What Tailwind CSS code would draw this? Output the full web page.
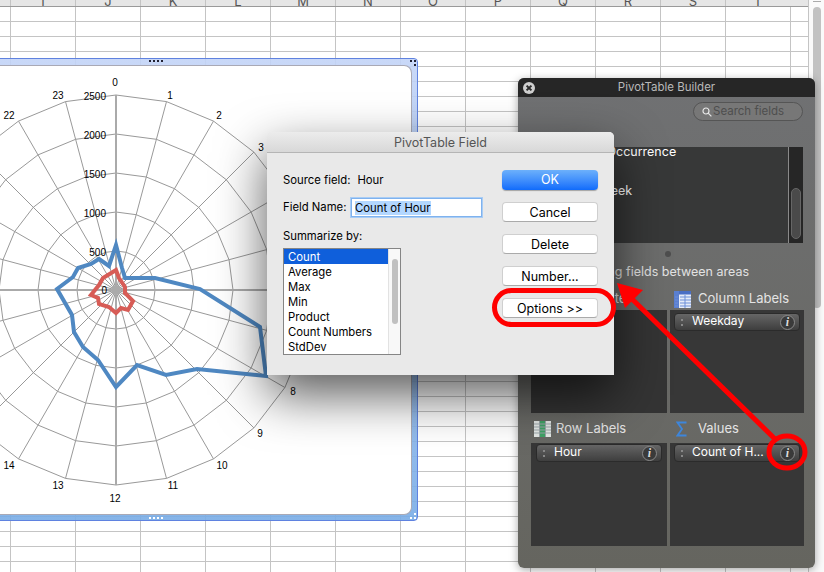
<!DOCTYPE html>
<html lang="en">
<head>
<meta charset="utf-8">
<title>PivotTable Field</title>
<script src="https://cdn.jsdelivr.net/npm/@tailwindcss/browser@4"></script>
</head>
<body class="bg-white">
<div class="relative w-[824px] h-[572px] overflow-hidden font-['Inter','Liberation_Sans',sans-serif] text-[11.3px] text-black">

	<!-- sheet: column header + cell grid + scrollbar -->
	<div class="absolute inset-0 flex">
		<div class="w-[808px] h-full flex flex-col">
			<div class="h-[7px] shrink-0 overflow-hidden bg-[#e6e6e6] border-b border-[#9a9a9a] flex pl-[10px] text-[13px] leading-[3px] text-[#555]">
				<div class="w-[65px] border-l border-[#c4c4c4] text-center">I</div>
				<div class="w-[65px] border-l border-[#c4c4c4] text-center">J</div>
				<div class="w-[65px] border-l border-[#c4c4c4] text-center">K</div>
				<div class="w-[65px] border-l border-[#c4c4c4] text-center">L</div>
				<div class="w-[65px] border-l border-[#c4c4c4] text-center">M</div>
				<div class="w-[65px] border-l border-[#c4c4c4] text-center">N</div>
				<div class="w-[65px] border-l border-[#c4c4c4] text-center">O</div>
				<div class="w-[65px] border-l border-[#c4c4c4] text-center">P</div>
				<div class="w-[65px] border-l border-[#c4c4c4] text-center">Q</div>
				<div class="w-[65px] border-l border-[#c4c4c4] text-center">R</div>
				<div class="w-[65px] border-l border-[#c4c4c4] text-center">S</div>
				<div class="w-[65px] border-l border-[#c4c4c4] text-center">T</div>
			</div>
			<div class="flex-1 bg-white bg-[linear-gradient(#c4c4c4_1px,transparent_1px),linear-gradient(90deg,#c4c4c4_1px,transparent_1px)] bg-[size:65px_15px] bg-[position:10px_14px]"></div>
		</div>
		<div class="w-[16px] h-full bg-[#fafafa] border-l border-[#c4c4c4] pl-[4px]">
			<div class="w-[8px] h-[2px] border-b border-[#aaa]"></div>
			<div class="w-[8px] h-[301px] mt-[5px] rounded-full bg-[#c2c2c2]"></div>
		</div>
	</div>

	<!-- chart object: selection frame -->
	<div class="absolute left-[-10px] top-[58px] w-[428px] h-[463px] rounded-tr-[4px] rounded-br-[4px] border border-[#5f82e0] bg-gradient-to-b from-[#c3d4f7]/90 to-[#78ace6]/90 pt-[6px] pr-[5px] pb-[5px]">
		<div class="w-full h-full bg-white rounded-tr-[8px] rounded-br-[8px] border-t border-r border-b border-[#a9a9b5]"></div>
		<div class="absolute left-[158px] top-[1px] flex gap-[2px]">
			<i class="w-[2px] h-[2px] bg-[#223]"></i><i class="w-[2px] h-[2px] bg-[#223]"></i><i class="w-[2px] h-[2px] bg-[#223]"></i><i class="w-[2px] h-[2px] bg-[#223]"></i>
		</div>
		<div class="absolute left-[158px] bottom-[1px] flex gap-[2px]">
			<i class="w-[2px] h-[2px] bg-white"></i><i class="w-[2px] h-[2px] bg-white"></i><i class="w-[2px] h-[2px] bg-white"></i><i class="w-[2px] h-[2px] bg-white"></i>
		</div>
		<div class="absolute right-[1px] top-[1px] grid grid-cols-2 gap-[2px]">
			<i class="w-[2px] h-[2px] bg-[#223]"></i><i class="w-[2px] h-[2px] bg-[#223]"></i><i class="w-[2px] h-[2px]"></i><i class="w-[2px] h-[2px] bg-[#223]"></i>
		</div>
		<div class="absolute right-[1px] bottom-[1px] grid grid-cols-2 gap-[2px]">
			<i class="w-[2px] h-[2px]"></i><i class="w-[2px] h-[2px] bg-white"></i><i class="w-[2px] h-[2px] bg-white"></i><i class="w-[2px] h-[2px] bg-white"></i>
		</div>
	</div>

	<!-- radar chart -->
	<svg id="radar" class="absolute left-0 top-0" width="824" height="572" font-family="Liberation Sans, sans-serif" font-size="10" fill="#000">
		<g id="rings" fill="none" stroke="#999" stroke-width="1"></g>
		<line x1="116" y1="95" x2="116" y2="485" stroke="#aaa" stroke-width="2"/>
		<line x1="-80" y1="290" x2="312" y2="290" stroke="#aaa" stroke-width="2"/>
		<rect x="112" y="286" width="8" height="8" fill="#aaa"/>
		<polygon fill="none" stroke="#4f88c2" stroke-width="4" stroke-linejoin="miter" points="116,245 122,268 125,278 155,278 200,289 260,327 266,376 197,369 166,375 137,365 116,387 98,360 83,347 74,332 72,315 57,289 73,277 78,268 91,264 99,259 109,266"/>
		<polygon fill="none" stroke="#d75c56" stroke-width="4" stroke-linejoin="miter" points="116,270 119,278 125,287 125,293 133,301 128,310 121,308 116,313 109,307 99,304 98,298 91,295 99,285 103,278 108,275"/>
		<g text-anchor="end">
			<text x="106" y="100">2500</text><text x="106" y="139">2000</text><text x="106" y="178">1500</text><text x="106" y="217">1000</text><text x="106" y="256">500</text><text x="107" y="294">0</text>
		</g>
		<g text-anchor="middle">
			<text x="115" y="86">0</text><text x="170" y="99">1</text><text x="219" y="119">2</text><text x="261" y="151">3</text>
			<text x="293" y="395">8</text><text x="260" y="437">9</text><text x="222" y="469">10</text><text x="173" y="489">11</text><text x="115" y="502">12</text><text x="58" y="489">13</text><text x="9" y="469">14</text><text x="9" y="119">22</text><text x="58" y="99">23</text>
		</g>
	</svg>

	<!-- PivotTable Builder panel -->
	<div class="absolute left-[518px] top-[78px] w-[297px] h-[490px] rounded-[6px] overflow-hidden bg-gradient-to-b from-[#707173] to-[#65655f] shadow-[0_2px_8px_rgba(0,0,0,0.35)] flex flex-col text-[#e4e4e4]">
		<div class="h-[19px] shrink-0 bg-[#262626] relative flex items-center justify-center pt-px text-[11.5px] text-[#b9b9b9]">
			<svg class="absolute left-[5px] top-[4px]" width="12" height="12" viewBox="0 0 12 12"><circle cx="6" cy="6" r="6" fill="#cfcfcf"/><path d="M3.6 3.6 8.4 8.4M8.4 3.6 3.6 8.4" stroke="#2a2a2a" stroke-width="2"/></svg>
			PivotTable Builder
		</div>
		<div class="h-[50px] shrink-0 pt-[5px] pr-[12px] flex justify-end items-start">
			<div class="w-[110px] h-[19px] rounded-full bg-[#777] border border-[#555] flex items-center pl-[8px] gap-[1px] pt-px text-[#4e4e4e] text-[11.5px]">
				<svg width="10" height="10" viewBox="0 0 10 10" fill="none" stroke="#e8e8e8" stroke-width="1.2"><circle cx="4" cy="4" r="3"/><path d="M6.2 6.2 9.4 9.4"/></svg>
				Search fields
			</div>
		</div>
		<div class="h-[96px] shrink-0 ml-[13px] mr-[12px] bg-[#373838] flex overflow-hidden">
			<div class="flex-1 -mt-[5px] pl-[26px] text-[12.5px] leading-[19.5px] text-white">
				<div class="whitespace-nowrap pl-[3px]">Date of Occurrence</div>
				<div>Hour</div>
				<div class="whitespace-nowrap">Day of Week</div>
			</div>
			<div class="w-[15px] border-l border-[#8a8a8a] bg-[#262626] pt-[41px] pl-[2px]">
				<div class="w-[10px] h-[51px] rounded-full bg-[#4a4a4a] border border-[#666]"></div>
			</div>
		</div>
		<div class="h-[21px] shrink-0 flex items-center justify-center pl-[2px]"><i class="w-[6px] h-[6px] rounded-full bg-[#4e4e4e]"></i></div>
		<div class="h-[15px] shrink-0 text-[12.5px] leading-[15px] text-right pr-[66px] whitespace-nowrap text-[#e2e2e2]">Drag fields between areas</div>
		<div class="mt-[1px] ml-[13px] mr-[11px] grid grid-cols-[136px_134px] gap-x-[3px] text-[13px]">
			<!-- Report Filter -->
			<div class="flex flex-col h-[133px]">
				<div class="h-[30px] flex items-center pt-[8px] pl-[25px] whitespace-nowrap">Report Filter</div>
				<div class="h-[103px] bg-[#343434]"></div>
			</div>
			<!-- Column Labels -->
			<div class="flex flex-col h-[133px]">
				<div class="h-[30px] flex items-center pt-[8px] pl-[4px] gap-[7px]">
					<svg width="17" height="17" viewBox="0 0 17 17"><rect width="17" height="17" rx="1" fill="#e6ecf8"/><rect width="17" height="3.5" fill="#4a6fc4"/><rect width="5" height="17" fill="#5a7fd0"/><path d="M6 6H17M6 9H17M6 12H17M6 15H17M11 4V17M1 6H4M1 9H4M1 12H4M1 15H4" stroke="#6d8fd8" stroke-width="1"/></svg>
					Column Labels
				</div>
				<div class="h-[103px] bg-[#373737] pt-[3px] px-[4px]">
					<div class="h-[18px] rounded-[4px] border border-[#2b2b2b] bg-gradient-to-b from-[#666] to-[#3e3e3e] flex items-center text-white text-[12px]">
						<div class="w-[14px] flex flex-col items-center gap-[3px]"><i class="w-[2px] h-[2px] bg-[#888]"></i><i class="w-[2px] h-[2px] bg-[#888]"></i></div>
						<span class="flex-1 pl-[3px] pb-[2px]">Weekday</span>
						<span class="w-[15px] h-[15px] mr-[4px] rounded-full bg-[#3a3a3a] border border-[#8a8a8a] flex items-center justify-center font-['Liberation_Serif',serif] italic font-bold text-[12px] leading-none text-[#ddd]">i</span>
					</div>
				</div>
			</div>
			<!-- Row Labels -->
			<div class="flex flex-col h-[133px]">
				<div class="h-[30px] flex items-center pt-[2px] pl-[3px] gap-[5px]">
					<svg width="17" height="16" viewBox="0 0 17 16"><rect width="17" height="16" fill="#e4e8e6"/><rect x="6" width="5" height="16" fill="#3fa266"/><path d="M0 3H17M0 6H17M0 9H17M0 12H17M5.5 0V16M11.5 0V16" stroke="#9aa5a8" stroke-width="1"/></svg>
					Row Labels
				</div>
				<div class="h-[103px] bg-[#373737] pt-[1px] px-[5px]">
					<div class="h-[18px] rounded-[4px] border border-[#2b2b2b] bg-gradient-to-b from-[#666] to-[#3e3e3e] flex items-center text-white text-[12px]">
						<div class="w-[14px] flex flex-col items-center gap-[3px]"><i class="w-[2px] h-[2px] bg-[#888]"></i><i class="w-[2px] h-[2px] bg-[#888]"></i></div>
						<span class="flex-1 pl-[3px] pb-[2px]">Hour</span>
						<span class="w-[15px] h-[15px] mr-[4px] rounded-full bg-[#3a3a3a] border border-[#8a8a8a] flex items-center justify-center font-['Liberation_Serif',serif] italic font-bold text-[12px] leading-none text-[#ddd]">i</span>
					</div>
				</div>
			</div>
			<!-- Values -->
			<div class="flex flex-col h-[133px]">
				<div class="h-[30px] flex items-center pt-[2px] pl-[6px] gap-[11px]">
					<svg width="11" height="16" viewBox="0 0 11 16" fill="none" stroke="#3d86dc" stroke-width="1.8"><path d="M10.5 1.5H1.5L6 8 1.5 14.5H10.5"/></svg>
					Values
				</div>
				<div class="h-[103px] bg-[#373737] pt-[1px] px-[4px]">
					<div class="h-[18px] rounded-[4px] border border-[#2b2b2b] bg-gradient-to-b from-[#666] to-[#3e3e3e] flex items-center text-white text-[12px]">
						<div class="w-[14px] flex flex-col items-center gap-[3px]"><i class="w-[2px] h-[2px] bg-[#888]"></i><i class="w-[2px] h-[2px] bg-[#888]"></i></div>
						<span class="flex-1 pl-[3px] pb-[2px] whitespace-nowrap">Count of H...</span>
						<span class="w-[15px] h-[15px] mr-[4px] rounded-full bg-[#3a3a3a] border border-[#8a8a8a] flex items-center justify-center font-['Liberation_Serif',serif] italic font-bold text-[12px] leading-none text-[#ddd]">i</span>
					</div>
				</div>
			</div>
		</div>
	</div>

	<!-- PivotTable Field dialog -->
	<div class="absolute left-[267px] top-[132px] w-[347px] h-[243px] rounded-t-[5px] bg-[#e9e9e9] shadow-[0_20px_50px_rgba(0,0,0,0.65)] flex flex-col">
		<div class="h-[21px] shrink-0 rounded-t-[5px] bg-gradient-to-b from-[#ececec] to-[#d8d8d8] border-b border-[#b5b5b5] flex items-center justify-center pt-[2px] text-[12.5px] text-[#555]">PivotTable Field</div>
		<div class="flex-1 flex pl-[16px] pr-[16px]">
			<div class="w-[219px]">
				<div class="h-[17px] mt-[19px] flex items-center gap-[7px]"><span>Source field:</span><span>Hour</span></div>
				<div class="mt-[9px] flex items-center gap-[8px] h-[19px]">
					<span class="w-[60px] whitespace-nowrap">Field Name:</span>
					<div class="w-[131px] h-[19px] bg-white border border-[#7fb2ee] shadow-[0_0_0_1px_#a9cdf5] pl-[3px] flex items-center"><span class="bg-[#b3d7ff] leading-[14px]">Count of Hour</span></div>
				</div>
				<div class="mt-[12px] h-[15px] leading-[15px]">Summarize by:</div>
				<div class="mt-[4px] w-[118px] h-[107px] border border-[#858585] bg-white flex">
					<div class="flex-1 leading-[17px]">
						<div class="bg-[#0f5fdb] text-white pl-[4px] h-[15px]">Count</div>
						<div class="pl-[4px] h-[15px]">Average</div>
						<div class="pl-[4px] h-[15px]">Max</div>
						<div class="pl-[4px] h-[15px]">Min</div>
						<div class="pl-[4px] h-[15px]">Product</div>
						<div class="pl-[4px] h-[15px]">Count Numbers</div>
						<div class="pl-[4px] h-[15px]">StdDev</div>
					</div>
					<div class="w-[12px] border-l border-[#e2e2e2] bg-[#f8f8f8] pl-[2.5px] pt-[10px]">
						<div class="w-[6px] h-[65px] rounded-full bg-[#c0c0c0]"></div>
					</div>
				</div>
			</div>
			<div class="pt-[17px] flex flex-col gap-[12px] text-[12.5px]">
				<button class="w-[96px] h-[20px] pt-px rounded-[4px] bg-gradient-to-b from-[#6cb0fb] to-[#0f6bfb] text-white shadow-[0_1px_1px_rgba(0,0,0,0.3)]">OK</button>
				<button class="w-[96px] h-[20px] pt-px rounded-[4px] bg-white border border-[#cfcfcf] border-b-[#aaa]">Cancel</button>
				<button class="w-[96px] h-[20px] pt-px rounded-[4px] bg-white border border-[#cfcfcf] border-b-[#aaa]">Delete</button>
				<button class="w-[96px] h-[20px] pt-px rounded-[4px] bg-white border border-[#cfcfcf] border-b-[#aaa]">Number...</button>
				<button class="w-[96px] h-[20px] pt-px rounded-[4px] bg-white border border-[#cfcfcf] border-b-[#aaa]">Options &gt;&gt;</button>
			</div>
		</div>
	</div>

	<!-- red annotations over everything -->
	<svg class="absolute left-0 top-0 pointer-events-none" width="824" height="572" fill="none" stroke="#ff0000">
		<rect x="494.5" y="290.5" width="119" height="34" rx="17" stroke-width="5"/>
		<ellipse cx="787" cy="452" rx="18" ry="16" stroke-width="5"/>
		<line x1="632" y1="299" x2="775" y2="439" stroke-width="5"/>
		<polygon points="617,283 643,290 625,308" fill="#ff0000" stroke="none"/>
	</svg>
</div>
<script>
	// rings and spokes of the radar: 24 hours, 5 rings of 39px
	var rings = document.getElementById('rings');
	var ns = 'http://www.w3.org/2000/svg';
	for (var r = 1; r <= 5; r++) {
		var pts = [];
		for (var h = 0; h < 24; h++) {
			var a = h * Math.PI / 12;
			pts.push((116 + 39 * r * Math.sin(a)).toFixed(1) + ',' + (290 - 39 * r * Math.cos(a)).toFixed(1));
		}
		var p = document.createElementNS(ns, 'polygon');
		p.setAttribute('points', pts.join(' '));
		rings.appendChild(p);
	}
	for (var h = 0; h < 24; h++) {
		var a = h * Math.PI / 12;
		var l = document.createElementNS(ns, 'line');
		l.setAttribute('x1', 116);
		l.setAttribute('y1', 290);
		l.setAttribute('x2', (116 + 195 * Math.sin(a)).toFixed(1));
		l.setAttribute('y2', (290 - 195 * Math.cos(a)).toFixed(1));
		rings.appendChild(l);
	}
</script>
</body>
</html>
